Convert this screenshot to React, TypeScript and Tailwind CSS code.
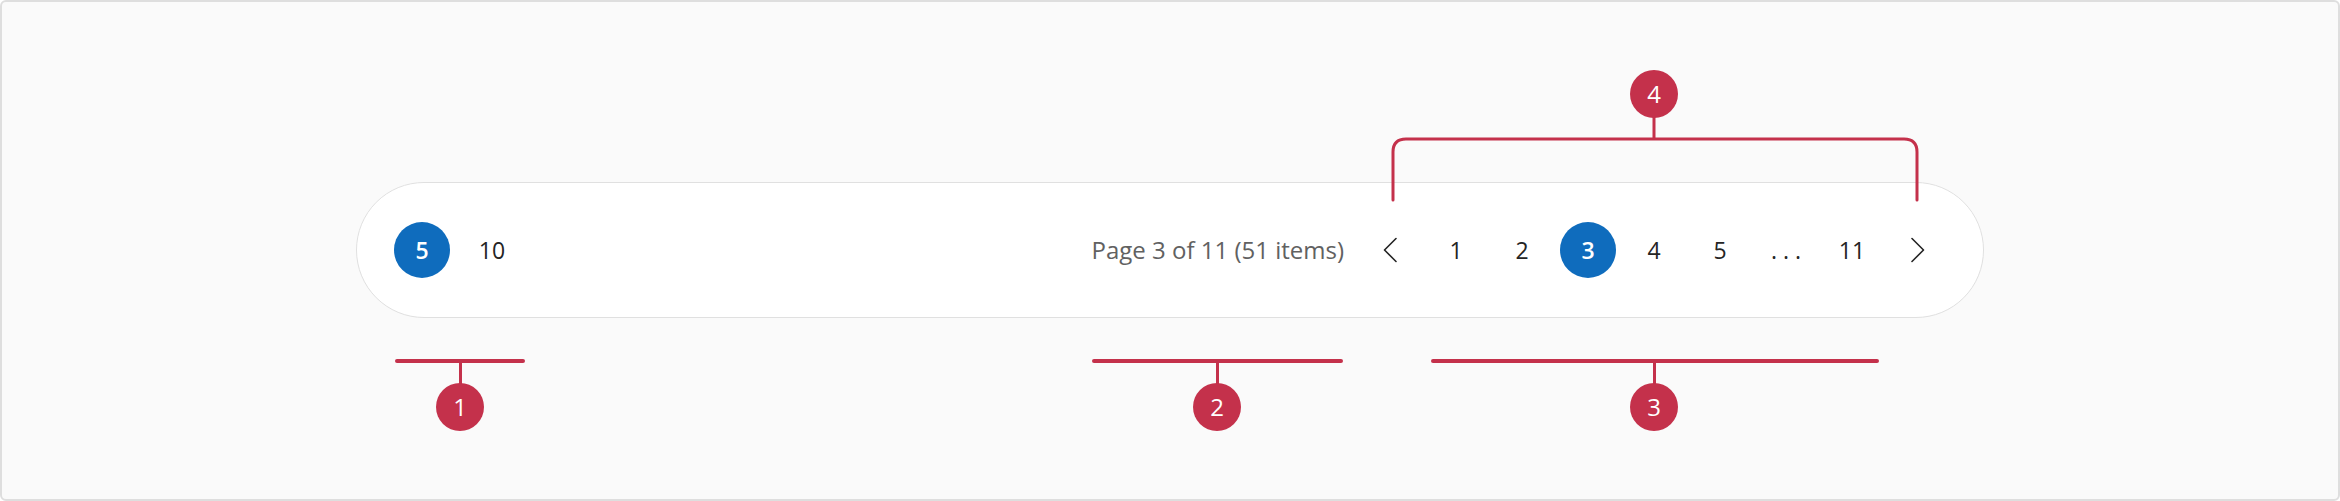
import React from "react";

const RED = "#c4314b";

const Chevron = ({ dir }: { dir: "left" | "right" }) => (
  <svg width="16" height="26" viewBox="0 0 16 26" fill="none">
    {dir === "left" ? (
      <path d="M14 1.5 L2.5 13 L14 24.5" stroke="#242424" strokeWidth="1.6" strokeLinecap="round" strokeLinejoin="round" />
    ) : (
      <path d="M2 1.5 L13.5 13 L2 24.5" stroke="#242424" strokeWidth="1.6" strokeLinecap="round" strokeLinejoin="round" />
    )}
  </svg>
);

const PageBtn = ({ label, active }: { label: React.ReactNode; active?: boolean }) => (
  <div
    className={
      active
        ? "w-[56px] h-[56px] rounded-full bg-[#0f6cbd] text-white font-semibold flex items-center justify-center text-[23px]"
        : "w-[56px] h-[56px] rounded-full text-[#242424] flex items-center justify-center text-[23px]"
    }
  >
    {label}
  </div>
);

const Badge = ({ n, className }: { n: number; className: string }) => (
  <div
    className={
      "absolute w-[48px] h-[48px] rounded-full bg-[#c4314b] text-white text-[24px] flex items-center justify-center " +
      className
    }
  >
    {n}
  </div>
);

// underline callout: horizontal bar with a stem down to the badge
const Underline = ({ x1, x2, cx, n }: { x1: number; x2: number; cx: number; n: number }) => (
  <>
    <div className="absolute top-[357px] h-[4px] rounded-full bg-[#c4314b]" style={{ left: x1, width: x2 - x1 }} />
    <div className="absolute top-[360px] h-[24px] w-[3px] bg-[#c4314b]" style={{ left: cx - 1.5 }} />
    <div
      className="absolute top-[381px] w-[48px] h-[48px] rounded-full bg-[#c4314b] text-white text-[24px] flex items-center justify-center"
      style={{ left: cx - 24 }}
    >
      {n}
    </div>
  </>
);

export default function App() {
  return (
    <div
      className="relative w-[2340px] h-[501px] bg-[#fafafa] border-2 border-[#dedede] rounded-[6px] overflow-hidden"
      style={{ fontFamily: '"Open Sans", "Noto Sans", sans-serif' }}
    >
      <div className="ml-[354px] mt-[180px] w-[1628px] h-[136px] rounded-full bg-white border border-[#e0e0e0] flex items-center pl-[37px] pr-[37px]">
        <div className="flex items-center gap-[14px]">
          <PageBtn label="5" active />
          <PageBtn label="10" />
        </div>
        <div className="ml-auto flex items-center">
          <span className="text-[24px] text-[#616161] mr-[18px]">Page 3 of 11 (51 items)</span>
          <div className="flex items-center gap-[10px]">
            <div className="w-[56px] h-[56px] flex items-center justify-center">
              <Chevron dir="left" />
            </div>
            <PageBtn label="1" />
            <PageBtn label="2" />
            <PageBtn label="3" active />
            <PageBtn label="4" />
            <PageBtn label="5" />
            <PageBtn label={<span className="tracking-[6px] pl-[6px]">...</span>} />
            <PageBtn label="11" />
            <div className="w-[56px] h-[56px] flex items-center justify-center">
              <Chevron dir="right" />
            </div>
          </div>
        </div>
      </div>

      {/* callout 4: bracket over the page buttons */}
      <Badge n={4} className="left-[1628px] top-[68px]" />
      <svg className="absolute left-[1386px] top-[112px]" width="540" height="90" viewBox="0 0 540 90" fill="none">
        <path
          d="M5 86 V38 Q5 25 18 25 H516 Q529 25 529 38 V86"
          stroke={RED}
          strokeWidth="3"
          strokeLinecap="round"
          fill="none"
        />
        <path d="M266 2 V25" stroke={RED} strokeWidth="3" />
      </svg>

      <Underline x1={393} x2={523} cx={458} n={1} />
      <Underline x1={1090} x2={1341} cx={1215} n={2} />
      <Underline x1={1429} x2={1877} cx={1652} n={3} />
    </div>
  );
}
